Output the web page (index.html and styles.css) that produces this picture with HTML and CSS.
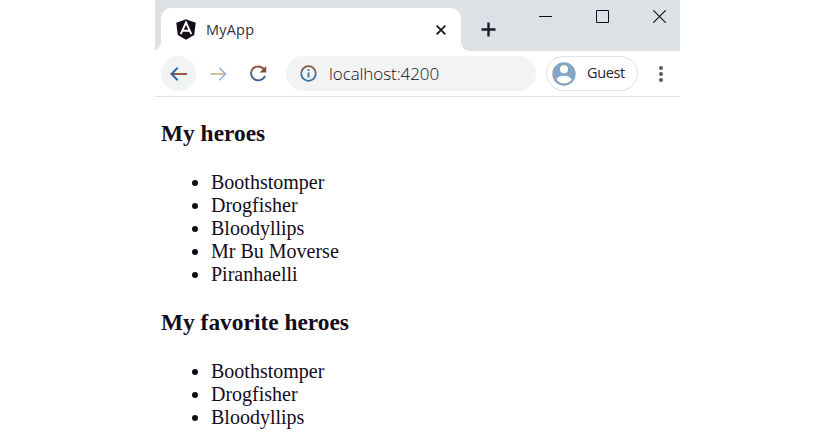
FILE: index.html
```html
<!DOCTYPE html>
<html lang="en">
<head>
<meta charset="utf-8">
<title>MyApp</title>
<link rel="stylesheet" href="styles.css">
</head>
<body>
<div class="window">
  <header class="tabstrip">
    <div class="tab">
      <svg class="logo" width="20" height="21" viewBox="0 0 20 21"><path d="M10 .3 19.7 3.7 18.2 16 10 20.7 1.8 16 .3 3.7Z" fill="#160b1b"/><path d="M4.7 15.2 10 3.5l5.3 11.7M6.6 11.8h6.8" fill="none" stroke="#fff" stroke-width="1.9"/></svg>
      <span class="tab-title">MyApp</span>
      <svg class="tab-close" width="10" height="10" viewBox="0 0 10 10"><path d="m.7.7 8.6 8.6m0-8.6L.7 9.3" stroke="#1b1420" stroke-width="1.8"/></svg>
    </div>
    <svg class="new-tab" width="15" height="15" viewBox="0 0 15 15"><path d="M7.5.5v14M.5 7.5h14" stroke="#1d1a2c" stroke-width="2.4"/></svg>
    <div class="controls">
      <svg width="13" height="13" viewBox="0 0 13 13"><path d="M0 6.5h13" stroke="#160b1b"/></svg>
      <svg width="13" height="13" viewBox="0 0 13 13"><path d="M.5.5h12v12H.5z" fill="none" stroke="#160b1b"/></svg>
      <svg width="13" height="13" viewBox="0 0 13 13"><path d="m.3.3 12.4 12.4m0-12.4L.3 12.7" stroke="#160b1b" stroke-width="1.1"/></svg>
    </div>
  </header>
  <nav class="toolbar">
    <span class="back"><svg width="17" height="14" viewBox="0 0 17 14"><path d="M7.7.8 1.5 7l6.2 6.2" fill="none" stroke="#2868ae" stroke-width="2"/><path d="M2.5 7H17" stroke="#87452f" stroke-width="1.8"/></svg></span>
    <svg class="forward" width="17" height="14" viewBox="0 0 17 14"><path d="M.5 7h14" stroke="#c4ab8c" stroke-width="1.5"/><path d="M9.3.8 15.5 7l-6.2 6.2" fill="none" stroke="#8cb0d3" stroke-width="1.5"/></svg>
    <svg class="reload" width="18" height="18" viewBox="0 0 18 18"><path d="M15.2 4.8A7.2 7.2 0 0 0 2.3 6.5" fill="none" stroke="#87553f" stroke-width="1.9"/><path d="M2.3 6.5A7.2 7.2 0 0 0 16 10.8" fill="none" stroke="#3f628e" stroke-width="1.9"/><path d="M17.2 1v6.6h-6.6Z" fill="#784a3c"/></svg>
    <div class="address">
      <svg width="17" height="17" viewBox="0 0 17 17"><path d="M1.2 8.5a7.3 7.3 0 0 1 14.6 0" fill="none" stroke="#7d5a4c" stroke-width="1.8"/><path d="M1.2 8.5a7.3 7.3 0 0 0 14.6 0M8.5 4.2v1.9M8.5 7.5v5" fill="none" stroke="#3b6da2" stroke-width="1.8"/></svg>
      <span class="url">localhost:4200</span>
    </div>
    <div class="profile">
      <svg width="24" height="24" viewBox="0 0 24 24"><circle cx="12" cy="12" r="11.7" fill="#7ba9d3"/><circle cx="12" cy="7.3" r="4" fill="#fff"/><path d="M4.2 17.4C6 14.5 9 13.7 12 13.7s6 .8 7.8 3.7c-2 2.7-4.8 4-7.8 4s-5.8-1.3-7.8-4Z" fill="#fff"/><g fill="none" stroke="#c98a50" stroke-width="1.3" stroke-dasharray="1.3 2.2"><circle cx="12" cy="12" r="10"/><path d="M4.5 13.5 8 10.8m8 0 3.5 2.7M5 10.5l2-3m10 0 2 3"/></g></svg>
      <span class="guest">Guest</span>
    </div>
    <svg class="menu" width="4" height="16" viewBox="0 0 4 16"><g fill="#665556"><circle cx="2" cy="2" r="2"/><circle cx="2" cy="8" r="2"/><circle cx="2" cy="14" r="2"/></g></svg>
  </nav>
  <main>
    <h3>My heroes</h3>
    <ul>
      <li>Boothstomper</li>
      <li>Drogfisher</li>
      <li>Bloodyllips</li>
      <li>Mr Bu Moverse</li>
      <li>Piranhaelli</li>
    </ul>
    <h3>My favorite heroes</h3>
    <ul>
      <li>Boothstomper</li>
      <li>Drogfisher</li>
      <li>Bloodyllips</li>
    </ul>
  </main>
</div>
</body>
</html>
```
FILE: styles.css
```css
* { box-sizing: border-box; }
body { margin: 0; background: #fff; color: #160b1b; overflow: hidden; }
svg { display: block; flex: none; }
.window { width: 525px; height: 437px; margin-left: 155px; overflow: hidden; font-family: "Open Sans", "Noto Sans", sans-serif; }
.tabstrip { height: 51px; background: #dce1e6; display: flex; padding-left: 6px; }
.tab { position: relative; width: 300px; height: 43px; margin-top: 8px; padding: 0 15px; background: #fff; border-radius: 10px 10px 0 0; display: flex; align-items: center; }
.tab::before, .tab::after { content: ""; position: absolute; bottom: 0; width: 9px; height: 9px; }
.tab::before { left: -9px; background: radial-gradient(circle at 0 0, transparent 8.5px, #fff 9px); }
.tab::after { right: -9px; background: radial-gradient(circle at 100% 0, transparent 8.5px, #fff 9px); }
.tab-title { margin-left: 10px; font-size: 14.5px; line-height: 20px; color: #352d3b; letter-spacing: .2px; }
.tab-close { margin-left: auto; }
.new-tab { margin: 22px 0 0 20px; }
.controls { display: flex; gap: 44px; margin: 10px 14px 0 auto; }
.toolbar { height: 46px; border-bottom: 1px solid #dce1e6; display: flex; align-items: center; padding-left: 6px; }
.back { width: 35px; height: 35px; border-radius: 50%; background: #f2f4f3; display: flex; align-items: center; justify-content: center; }
.forward { margin-left: 14px; }
.reload { margin-left: 22px; }
.address { width: 250px; height: 35px; margin-left: 19px; padding-left: 14px; border-radius: 18px; background: #f2f4f3; display: flex; align-items: center; }
.url { margin-left: 12px; font-size: 17px; font-weight: 350; letter-spacing: -.08px; }
.profile { width: 92px; height: 35px; margin-left: 10px; padding-left: 5px; border: 1px solid #dce1e6; border-radius: 18px; display: flex; align-items: center; }
.guest { margin: -2px 0 0 11px; font-size: 14.5px; color: #2a2230; letter-spacing: -.4px; }
.menu { margin-left: 21px; }
main { padding: 23px 6px 0; font: 20px/23px "Liberation Serif", serif; }
h3 { margin: 0 0 24px; font-size: 23.4px; line-height: 27px; }
ul { margin: 0 0 23px; padding-left: 50px; }
```
